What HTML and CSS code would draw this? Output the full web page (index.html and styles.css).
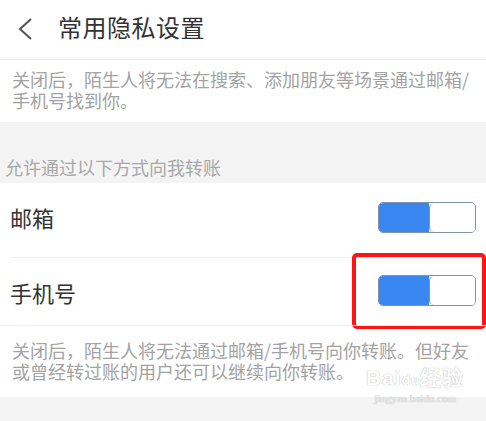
FILE: index.html
```html
<!DOCTYPE html>
<html lang="zh-CN">
<head>
    <meta charset="UTF-8">
    <meta name="viewport" content="width=device-width, initial-scale=1.0">
    <title>常用隐私设置</title>
    <link rel="stylesheet" href="styles.css">
</head>
<body>
<main class="page">
    <header class="topBar">
        <svg class="backIcon" width="16" height="24" viewBox="0 0 16 24" aria-label="返回">
            <polyline points="14,2 3,12 14,22" fill="none" stroke="#555" stroke-width="2"/>
        </svg>
        <h1 class="pageTitle">常用隐私设置</h1>
    </header>

    <section class="note noteTop">
        <p class="noteLine">关闭后，陌生人将无法在搜索、添加朋友等场景通过邮箱/</p>
        <p class="noteLine">手机号找到你。</p>
    </section>

    <div class="groupLabel">允许通过以下方式向我转账</div>

    <section class="settingRow">
        <span class="rowLabel">邮箱</span>
        <div class="toggle"><span class="toggleOn"></span><span class="toggleOff"></span></div>
    </section>

    <section class="settingRow settingRowMarked">
        <span class="rowLabel">手机号</span>
        <div class="toggle"><span class="toggleOn"></span><span class="toggleOff"></span></div>
        <div class="markBox"></div>
    </section>

    <section class="note noteBottom">
        <p class="noteLine">关闭后，陌生人将无法通过邮箱/手机号向你转账。但好友</p>
        <p class="noteLine">或曾经转过账的用户还可以继续向你转账。</p>
        <div class="watermark">
            <span class="wmLogo">Bai<span class="wmDu">du</span>经验</span>
            <span class="wmUrl">jingyan.baidu.com</span>
        </div>
    </section>

    <div class="bottomGap"></div>
</main>
</body>
</html>
```

FILE: styles.css
```css
* {
    box-sizing: border-box;
    margin: 0;
    padding: 0;
    font-family: 'Noto Sans CJK SC', 'Noto Sans', sans-serif;
}

body {
    background-color: #ffffff;
    width: 486px;
    height: 421px;
    overflow: hidden;
}

.page {
    display: flex;
    flex-direction: column;
    height: 421px;
}

/* TOP BAR */
.topBar {
    height: 60px;
    display: flex;
    align-items: center;
    padding-left: 17px;
    border-bottom: 1px solid #ececec;
}

.backIcon {
    margin-top: -1px;
}

.pageTitle {
    margin-left: 25px;
    margin-top: -6px;
    font-size: 24px;
    font-weight: normal;
    color: #333333;
    letter-spacing: 0.5px;
}

/* NOTES */
.note {
    position: relative;
    padding-left: 12px;
    font-size: 18px;
    color: #a3a3a3;
}

.noteLine {
    height: 21px;
    line-height: 21px;
    white-space: nowrap;
}

.noteTop {
    height: 62px;
    padding-top: 9px;
}

.noteBottom {
    height: 72px;
    padding-top: 14px;
    border-top: 1px solid #f0f0f0;
}

.groupLabel {
    height: 61px;
    padding: 35px 0 0 5px;
    background-color: #f4f4f4;
    font-size: 18px;
    color: #a8a8a8;
    line-height: 21px;
}

/* ROWS */
.settingRow {
    position: relative;
    height: 74px;
    display: flex;
    align-items: center;
    justify-content: space-between;
    padding: 0 10px 6px 10px;
}

.settingRow + .settingRow {
    height: 68px;
    border-top: 1px solid #f0f0f0;
    margin-left: 10px;
    padding: 0 10px 0 0;
}

.rowLabel {
    font-size: 22px;
    color: #333333;
}

.settingRowMarked .toggle {
    margin-top: -2px;
}

.toggle {
    display: flex;
    width: 98px;
    height: 31px;
    border-radius: 5px;
    overflow: hidden;
    border: 1.5px solid #7f93a9;
}

.toggleOn {
    width: 50px;
    background-color: #3a87f2;
}

.toggleOff {
    flex: 1;
    background-color: #ffffff;
    border-left: 1.5px solid #7f93a9;
    border-radius: 5px 0 0 5px;
}

.markBox {
    position: absolute;
    left: 342px;
    top: -5px;
    width: 134px;
    height: 76px;
    border: 4px solid #ff1414;
    border-radius: 5px;
}

/* WATERMARK */
.watermark {
    position: absolute;
    left: 366px;
    top: 40px;
    display: flex;
    flex-direction: column;
    align-items: center;
    color: #ffffff;
    text-shadow: 0 0 1px #bdbdbd, 0 0 1px #bdbdbd;
}

.wmLogo {
    font-family: 'Liberation Sans', sans-serif;
    font-size: 21px;
    font-weight: bold;
    line-height: 24px;
    letter-spacing: 1px;
}

.wmDu {
    font-size: 13px;
}

.wmUrl {
    font-family: 'Liberation Serif', serif;
    font-size: 11px;
    line-height: 13px;
    color: #f0f0f0;
}

.bottomGap {
    flex: 1;
    background-color: #f4f4f4;
}
```
